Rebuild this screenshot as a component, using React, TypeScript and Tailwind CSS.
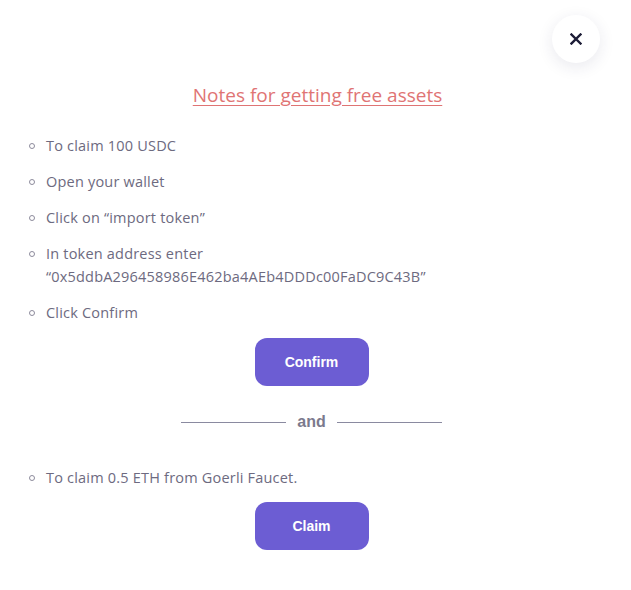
import React from 'react';

const items = [
    ['To claim 100 USDC'],
    ['Open your wallet'],
    ['Click on “import token”'],
    ['In token address enter', '“0x5ddbA296458986E462ba4AEb4DDDc00FaDC9C43B”'],
    ['Click Confirm'],
];

const Bullet = () => (
    <span className="mt-[9px] h-[6px] w-[6px] shrink-0 rounded-full border border-[#8d8b9c]" />
);

const Item = ({ lines }: { lines: string[] }) => (
    <li className="flex gap-[11px]">
        <Bullet />
        <div className="flex flex-col">
            {lines.map((l) => (
                <span key={l}>{l}</span>
            ))}
        </div>
    </li>
);

const ActionButton = ({ label }: { label: string }) => (
    <button className="mx-auto flex h-[48px] w-[114px] items-center justify-center rounded-[12px] bg-[#6c5dd3] text-[14px] font-bold text-white [font-family:'Liberation_Sans',Arial,sans-serif]">
        {label}
    </button>
);

export default function App() {
    return (
        <div className="relative h-[590px] w-[631px] overflow-hidden bg-white [font-family:'Open_Sans',sans-serif]">
            <button className="absolute right-[31px] top-[15px] flex h-[48px] w-[48px] items-center justify-center rounded-full bg-white shadow-[0_4px_16px_rgba(40,40,90,0.10)]">
                <svg width="12" height="12" viewBox="0 0 12 12" fill="none" stroke="#1c1c36" strokeWidth="2.4" strokeLinecap="square">
                    <path d="M1.5 1.5l9 9M10.5 1.5l-9 9" />
                </svg>
            </button>

            <div className="flex flex-col pl-[29px] pr-[37px] pt-[81px]">
                <h2 className="pl-[12px] text-center text-[19px] leading-[28px] text-[#df7474] underline underline-offset-[3px]">
                    Notes for getting free assets
                </h2>

                <ul className="mt-[25px] flex flex-col gap-[13px] text-[14.5px] font-medium leading-[23px] tracking-[0.2px] text-[#6d6a80]">
                    {items.map((lines) => (
                        <Item key={lines[0]} lines={lines} />
                    ))}
                </ul>

                <div className="mt-[14px]">
                    <ActionButton label="Confirm" />
                </div>

                <div className="mt-[24px] flex items-center justify-center gap-[11px]">
                    <span className="h-px w-[105px] bg-[#8a8aa0]" />
                    <span className="text-[16px] font-bold leading-[24px] text-[#7b7a8d] [font-family:'Liberation_Sans',Arial,sans-serif]">and</span>
                    <span className="h-px w-[105px] bg-[#8a8aa0]" />
                </div>

                <ul className="mt-[32px] flex flex-col text-[14.5px] font-medium leading-[23px] tracking-[0.2px] text-[#6d6a80]">
                    <Item lines={['To claim 0.5 ETH from Goerli Faucet.']} />
                </ul>

                <div className="mt-[13px]">
                    <ActionButton label="Claim" />
                </div>
            </div>
        </div>
    );
}
